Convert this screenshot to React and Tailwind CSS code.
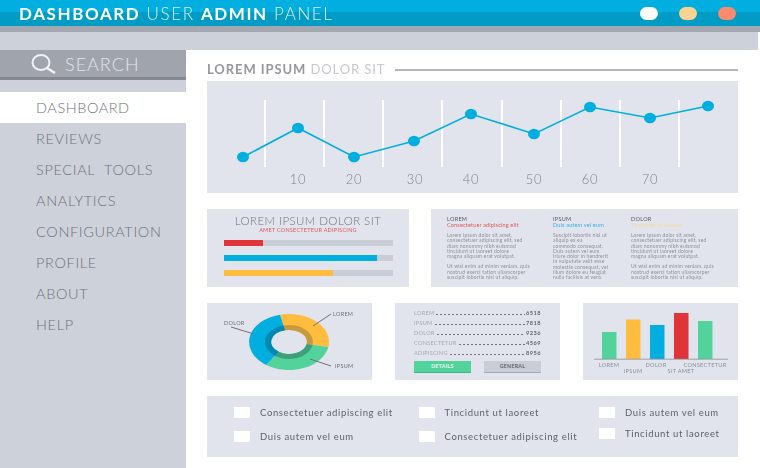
import React from "react";

const font = { fontFamily: '"Lato", "Open Sans", sans-serif' };
const NAV = ["REVIEWS", "SPECIAL TOOLS", "ANALYTICS", "CONFIGURATION", "PROFILE", "ABOUT", "HELP"];

const PTS = [[243,157],[298,128],[354,157],[414,141],[471,114],[534,134],[590,107],[650,118],[708,106]];
const GRID = [265,324,383,442,502,561,620,679];
const XL = [[298,"10"],[354,"20"],[415,"30"],[471,"40"],[534,"50"],[590,"60"],[650,"70"]];

function LineChart() {
  return (
    <svg width="531" height="112" viewBox="207 81 531 112" className="block blur-[0.25px]">
      {GRID.map((x) => <line key={x} x1={x} x2={x} y1="100" y2="167" stroke="#fff" strokeWidth="2" />)}
      <polyline points={PTS.map((p) => p.join(",")).join(" ")} fill="none" stroke="#00aee0" strokeWidth="1.6" />
      {PTS.map(([x, y]) => <ellipse key={x} cx={x} cy={y} rx="6" ry="5.3" fill="#00aee0" />)}
      {XL.map(([x, t]) => (
        <text key={t} x={x} y="184" textAnchor="middle" fontSize="13" fontWeight="300" letterSpacing="0.6" fill="#7f8289">{t}</text>
      ))}
    </svg>
  );
}

function seg(a0, a1, rx, ry, irx, iry) {
  const cx = 289, cy = 342, r = (d) => (d * Math.PI) / 180;
  const P = (a, x, y) => `${(cx + x * Math.cos(r(a))).toFixed(1)} ${(cy + y * Math.sin(r(a))).toFixed(1)}`;
  const large = a1 - a0 > 180 ? 1 : 0;
  return `M${P(a0, rx, ry)} A${rx} ${ry} 0 ${large} 1 ${P(a1, rx, ry)} L${P(a1, irx, iry)} A${irx} ${iry} 0 ${large} 0 ${P(a0, irx, iry)} Z`;
}

function Donut() {
  return (
    <svg width="165" height="77" viewBox="207 303 165 77" className="block blur-[0.3px]">
      <path d={seg(-103, 10, 40, 28, 18, 12)} fill="#ffbd3f" />
      <path d={seg(10, 125, 40, 28, 18, 12)} fill="#52d39b" />
      <path d={seg(125, 257, 40, 28, 18, 12)} fill="#00aee0" />
      <path d={seg(-103, 10, 24, 17, 18, 12)} fill="#c9993f" />
      <path d={seg(10, 125, 24, 17, 18, 12)} fill="#3f9f7c" />
      <path d={seg(125, 257, 24, 17, 18, 12)} fill="#0088b0" />
      <g stroke="#6d7078" strokeWidth="1">
        <line x1="313" y1="326" x2="331" y2="314" />
        <line x1="231" y1="327" x2="254" y2="334" />
        <line x1="310" y1="359" x2="331" y2="366" />
      </g>
      <g fontSize="5.5" fill="#6d7078" letterSpacing="0.3">
        <text x="333" y="315.5">LOREM</text>
        <text x="224" y="325">DOLOR</text>
        <text x="335" y="367.5">IPSUM</text>
      </g>
    </svg>
  );
}

const BARS = [[602,332,"#52d39b"],[626,319.5,"#ffbd3f"],[650,325,"#00aee0"],[674,313,"#e0343a"],[698,321,"#52d39b"]];
function BarChart() {
  return (
    <svg width="155" height="77" viewBox="583 303 155 77" className="block blur-[0.3px]">
      {BARS.map(([x, y, c]) => <rect key={x} x={x} y={y} width="14.5" height={359 - y} fill={c} />)}
      <line x1="594" x2="728" y1="359.2" y2="359.2" stroke="#8b8e95" strokeWidth="0.8" />
      <g fontSize="5.6" fill="#8b8e95" textAnchor="middle" letterSpacing="0.3">
        <text x="609" y="367">LOREM</text>
        <text x="633" y="373">IPSUM</text>
        <text x="656" y="367">DOLOR</text>
        <text x="681" y="373">SIT AMET</text>
        <text x="705" y="367">CONSECTETUR</text>
      </g>
    </svg>
  );
}

function Para({ lines }) {
  return (
    <div className="leading-[5.3px]">
      {lines.map((l) => <div key={l} className="whitespace-nowrap">{l}</div>)}
    </div>
  );
}

function TextCol({ head, sub, subClass, width, p1, p2 }) {
  return (
    <div className={width + " text-[5px] tracking-[0.18px] text-[#8d9097] blur-[0.45px]"}>
      <div className="text-[5.5px] leading-[6px] tracking-[0.3px] text-[#55585f]">{head}</div>
      <div className={"text-[5.5px] leading-[7px] mb-[4px] " + subClass}>{sub}</div>
      <Para lines={p1} />
      {p2 && <div className="mt-[5px]"><Para lines={p2} /></div>}
    </div>
  );
}

const P1 = ["Lorem ipsum dolor sit amet,", "consectetuer adipiscing elit, sed", "diam nonummy nibh euismod", "tincidunt ut laoreet dolore", "magna aliquam erat volutpat."];
const P2 = ["Ut wisi enim ad minim veniam, quis", "nostrud exerci tation ullamcorper", "suscipit lobortis nisl ut aliquip."];
const P3 = ["Suscipit lobortis nisl ut", "aliquip ex ea", "commodo consequat.", "Duis autem vel eum", "iriure dolor in hendrerit", "in vulputate velit esse", "molestie consequat, vel", "illum dolore eu feugiat", "nulla facilisis at vero."];

const STATS = [["LOREM","6518"],["IPSUM","7818"],["DOLOR","9236"],["CONSECTETUR","4569"],["ADIPISCING","8956"]];

function Check({ label, width }) {
  return (
    <div className={"flex items-center gap-[10px] " + (width || "")}>
      <div className="w-[16px] h-[11px] bg-white" />
      <span className="text-[9.5px] tracking-[0.64px] leading-[11px] font-normal text-[#5f6269] whitespace-nowrap blur-[0.25px]">{label}</span>
    </div>
  );
}

export default function App() {
  return (
    <div style={font} className="w-[760px] h-[468px] overflow-hidden bg-white flex flex-col">
      <header className="h-[32px] shrink-0 border-b-[6px] border-[#a4a8b0] bg-[linear-gradient(#00aee0_46%,#009cc5_46%)] flex items-center justify-between pl-[19px] pr-[24px]">
        <div className="text-[17px] leading-none tracking-[1.6px] text-[#d9f0f8] whitespace-nowrap font-light blur-[0.25px]">
          <span className="font-bold text-white">DASHBOARD</span> USER <span className="font-bold text-white">ADMIN</span> PANEL
        </div>
        <div className="flex gap-[21px]">
          <div className="w-[18px] h-[13px] rounded-full bg-white" />
          <div className="w-[18px] h-[13px] rounded-full bg-[#fbd38f]" />
          <div className="w-[18px] h-[13px] rounded-full bg-[#fc8a6c]" />
        </div>
      </header>
      <div className="h-[18px] shrink-0 bg-[#cdd1da] mr-[2px]" />
      <div className="flex flex-1 min-h-0">
        <aside className="w-[186px] shrink-0 bg-[#cdd1da]">
          <div className="h-[30px] bg-[#a0a4ac] border-b-[3px] border-[#85888f] flex items-center pl-[31px] gap-[9px]">
            <svg width="25" height="20" viewBox="0 0 25 20" fill="none" stroke="#f1f2f4" strokeWidth="2">
              <ellipse cx="10" cy="8.5" rx="8.5" ry="7.5" />
              <line x1="16" y1="14" x2="24" y2="19" strokeWidth="2.5" />
            </svg>
            <span className="text-[18px] tracking-[1px] font-light text-[#e3e5e9] leading-none">SEARCH</span>
          </div>
          <div className="mt-[12px] h-[31px] bg-white flex items-center pl-[36px] text-[14.5px] tracking-[0.55px] font-light text-[#6f7279]">DASHBOARD</div>
          {NAV.map((n) => (
            <div key={n} className="h-[31px] flex items-center pl-[36px] text-[14.5px] tracking-[0.65px] [word-spacing:5px] font-light text-[#6f7279]">{n}</div>
          ))}
        </aside>
        <main className="flex-1 pl-[21px] pr-[22px] pt-[8px]">
          <div className="h-[23px] flex items-center gap-[10px]">
            <div className="text-[13px] tracking-[0.92px] whitespace-nowrap font-bold text-[#95979c] blur-[0.2px]">
              LOREM IPSUM <span className="font-normal text-[#c6c8cd]">DOLOR SIT</span>
            </div>
            <div className="flex-1 h-[2px] bg-[#b4b6b9]" />
          </div>
          <section className="h-[112px] bg-[#e1e4ec]"><LineChart /></section>

          <div className="flex justify-between mt-[16px] h-[78px]">
            <section className="w-[202px] bg-[#e1e4ec] pt-[5px] px-[16.5px]">
              <div className="text-center text-[11.5px] leading-[13px] tracking-[0.42px] font-light text-[#6f7279] whitespace-nowrap blur-[0.2px]">LOREM IPSUM DOLOR SIT</div>
              <div className="text-center text-[5.5px] leading-[7px] tracking-[0.25px] text-[#e0555a] whitespace-nowrap blur-[0.35px]">AMET CONSECTETEUR ADIPISCING</div>
              <div className="mt-[6px] flex flex-col gap-[9px]">
                <div className="h-[6px] bg-[#c9cdd6]"><div className="h-full w-[39.5px] bg-[#e0343a]" /></div>
                <div className="h-[6px] bg-[#c9cdd6]"><div className="h-full w-[153.5px] bg-[#00aee0]" /></div>
                <div className="h-[6px] bg-[#c9cdd6]"><div className="h-full w-[109.5px] bg-[#ffbd3f]" /></div>
              </div>
            </section>
            <section className="w-[307px] bg-[#e1e4ec] pl-[16px] pt-[7px] flex">
              <TextCol width="w-[106px]" head="LOREM" sub="Consectetuer adipiscing elit" subClass="text-[#e0555a]" p1={P1} p2={P2} />
              <TextCol width="w-[78px]" head="IPSUM" sub="Duis autem vel eum" subClass="text-[#2db5e0]" p1={P3} />
              <TextCol width="w-[90px]" head="DOLOR" sub="Tincidunt ut laoreet" subClass="text-[#f3d89a]" p1={P1} p2={P2} />
            </section>
          </div>

          <div className="flex justify-between mt-[16px] h-[77px]">
            <section className="w-[165px] bg-[#e1e4ec]"><Donut /></section>
            <section className="w-[165px] bg-[#e1e4ec] px-[19px] pt-[5px]">
              {STATS.map(([k, v]) => (
                <div key={k} className="h-[10px] flex items-center text-[5.6px] tracking-[0.25px] text-[#a5a8af]">
                  <span className="blur-[0.3px]">{k}</span>
                  <span className="flex-1 mx-[1px] h-[3px] mt-[2px] bg-[radial-gradient(circle,#6f7279_0.6px,transparent_0.9px)] bg-[length:4px_3px]" />
                  <span className="text-[#5f6269] font-bold tracking-[0.5px] blur-[0.3px]">{v}</span>
                </div>
              ))}
              <div className="flex justify-between mt-[3px]">
                <div className="w-[57px] h-[12px] bg-[#52d39b] border-b border-[#3fb583] flex items-center justify-center text-[5.2px] font-bold tracking-[0.3px] text-[#eefaf5]">DETAILS</div>
                <div className="w-[57px] h-[12px] bg-[#c9cdd6] border-b border-[#a4a8b0] flex items-center justify-center text-[5.2px] font-bold tracking-[0.3px] text-[#5f6269]">GENERAL</div>
              </div>
            </section>
            <section className="w-[155px] bg-[#e1e4ec]"><BarChart /></section>
          </div>

          <section className="mt-[16px] h-[61px] bg-[#e1e4ec] pl-[27px] pt-[11px] flex">
            <div className="w-[184.5px] flex flex-col gap-[13px]">
              <Check label="Consectetuer adipiscing elit" />
              <Check label="Duis autem vel eum" />
            </div>
            <div className="w-[180.5px] flex flex-col gap-[13px]">
              <Check label="Tincidunt ut laoreet" />
              <Check label="Consectetuer adipiscing elit" />
            </div>
            <div className="flex flex-col gap-[10px]">
              <Check label="Duis autem vel eum" />
              <Check label="Tincidunt ut laoreet" />
            </div>
          </section>
        </main>
      </div>
    </div>
  );
}
